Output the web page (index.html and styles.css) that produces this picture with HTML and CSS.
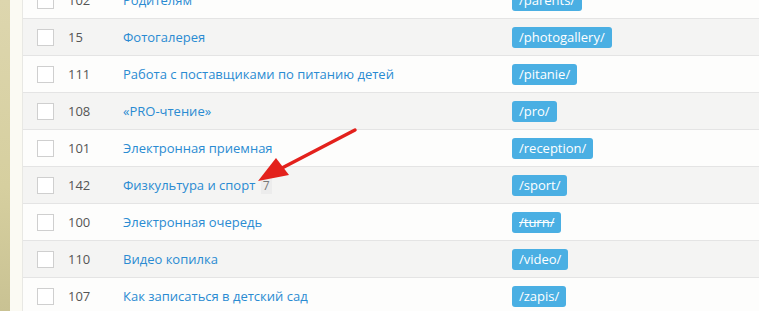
FILE: index.html
```html
<!DOCTYPE html>
<html lang="ru">
<head>
  <meta charset="UTF-8">
  <title>Разделы</title>
  <link rel="stylesheet" href="styles.css">
</head>
<body>
  <div class="desk"></div>
  <div class="gutter"></div>
  <div class="panel">
    <div class="rows">
      <div class="row"><span class="chk"></span><span class="num">102</span><a class="title" href="#">Родителям</a><span class="path">/parents/</span></div>
      <div class="row alt"><span class="chk"></span><span class="num">15</span><a class="title" href="#">Фотогалерея</a><span class="path">/photogallery/</span></div>
      <div class="row"><span class="chk"></span><span class="num">111</span><a class="title" href="#">Работа с поставщиками по питанию детей</a><span class="path">/pitanie/</span></div>
      <div class="row alt"><span class="chk"></span><span class="num">108</span><a class="title" href="#">«PRO-чтение»</a><span class="path">/pro/</span></div>
      <div class="row"><span class="chk"></span><span class="num">101</span><a class="title" href="#">Электронная приемная</a><span class="path">/reception/</span></div>
      <div class="row alt"><span class="chk"></span><span class="num">142</span><span class="title"><a href="#">Физкультура и спорт</a> <span class="count">7</span></span><span class="path">/sport/</span></div>
      <div class="row"><span class="chk"></span><span class="num">100</span><a class="title" href="#">Электронная очередь</a><span class="path off">/turn/</span></div>
      <div class="row alt"><span class="chk"></span><span class="num">110</span><a class="title" href="#">Видео копилка</a><span class="path">/video/</span></div>
      <div class="row"><span class="chk"></span><span class="num">107</span><a class="title" href="#">Как записаться в детский сад</a><span class="path">/zapis/</span></div>
    </div>
  </div>

  <svg class="arrow" width="759" height="311" viewBox="0 0 759 311">
    <path d="M355 130 L282 168" stroke="#e3211c" stroke-width="3.5" stroke-linecap="round" fill="none"/>
    <path d="M258 181 L276 158 L289 175 Z" fill="#e3211c"/>
  </svg>
</body>
</html>
```

FILE: styles.css
```css
body {
  margin: 0;
  height: 311px;
  overflow: hidden;
  display: flex;
  font-family: 'Open Sans', sans-serif;
  font-size: 13px;
  background: #fbfaf5;
}

.desk {
  width: 10px;
  background: linear-gradient(180deg, #ddd6ae 0%, #d6cf9f 60%, #c9c293 100%);
}

.gutter {
  width: 12px;
  background: #fbfaf3;
  border-right: 1px solid #e8e8e4;
}

.panel {
  flex: 1;
  background: #fbfbfa;
}

.rows {
  margin-top: -18px;
}

.row {
  display: grid;
  grid-template-columns: 45px 55px 389px 1fr;
  align-items: center;
  height: 36px;
  border-bottom: 1px solid #e4e4e4;
  background: #fdfdfc;
}

.row.alt {
  background: #f4f4f3;
}

.chk {
  margin-left: 14px;
  width: 15px;
  height: 15px;
  border: 1px solid #cfcfcf;
  background: #fff;
}

.num {
  color: #555;
}

.title {
  color: #2a8bd2;
  text-decoration: none;
}

.title a {
  color: #2a8bd2;
  text-decoration: none;
}

.count {
  display: inline-block;
  margin-left: 2px;
  background: #ececec;
  color: #777;
  font-size: 12px;
  padding: 0 2px;
  line-height: 17px;
}

.path {
  justify-self: start;
  background: #4aafe3;
  color: #fff;
  border-radius: 3px;
  padding: 0 7px;
  line-height: 21px;
}

.path.off {
  text-decoration: line-through;
}

.arrow {
  position: absolute;
  left: 0;
  top: 0;
  pointer-events: none;
}
```
